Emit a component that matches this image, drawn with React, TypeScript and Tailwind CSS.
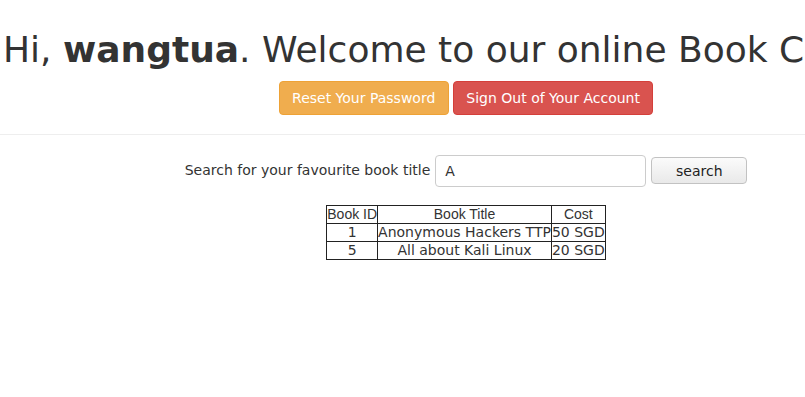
import React, { useState } from 'react';

const books = [
  { id: 1, title: 'Anonymous Hackers TTP', cost: '50 SGD' },
  { id: 5, title: 'All about Kali Linux', cost: '20 SGD' },
];

const App = () => {
  const [query, setQuery] = useState('A');

  return (
    <div className="w-[805px] h-[397px] overflow-hidden bg-white text-[#333] font-['DejaVu_Sans',sans-serif]">
      <div className="w-[932px] pt-[30px]">
        {/* heading is wider than the window, it gets clipped on the right like the original */}
        <h1 className="whitespace-nowrap pl-[3px] text-[36px] leading-[39.6px] font-normal">
          Hi, <b className="font-bold">wangtua</b>. Welcome to our online Book Catalogue
        </h1>

        <div className="mt-[11px] flex justify-center gap-[4px]">
          <button className="px-[12.5px] py-[6px] text-[14px] leading-[20px] text-white bg-[#f0ad4e] border border-[#eea236] rounded-[4px]">
            Reset Your Password
          </button>
          <button className="px-[12.5px] py-[6px] text-[14px] leading-[20px] text-white bg-[#d9534f] border border-[#d43f3a] rounded-[4px]">
            Sign Out of Your Account
          </button>
        </div>
      </div>

      <hr className="mt-[19px] w-[805px] border-t border-[#eee]" />

      <div className="w-[932px]">
        <div className="mt-[20px] flex justify-center items-center gap-[5px] text-[14px]">
          <label>Search for your favourite book title</label>
          <input
            value={query}
            onChange={(e) => setQuery(e.target.value)}
            className="w-[211px] h-[32px] px-[9px] pt-[1px] border border-[#ccc] rounded-[4px] text-[14px] outline-none"
          />
          <button className="w-[96px] h-[27px] pt-[2px] rounded-[4px] border border-[#c2c2c2] bg-gradient-to-b from-[#fbfbfb] to-[#e9e9e9] text-[14px] text-[#222]">
            search
          </button>
        </div>

        <table className="mx-auto mt-[18px] border-collapse text-[14px]">
          <thead>
            <tr className="font-['Liberation_Sans',sans-serif]">
              <th className="border border-[#222] p-0 leading-[17px] font-normal">Book ID</th>
              <th className="border border-[#222] p-0 leading-[17px] font-normal">Book Title</th>
              <th className="border border-[#222] p-0 leading-[17px] font-normal">Cost</th>
            </tr>
          </thead>
          <tbody>
            {books.map((b) => (
              <tr key={b.id}>
                <td className="border border-[#222] p-0 leading-[17px] text-center">{b.id}</td>
                <td className="border border-[#222] p-0 leading-[17px] text-center">{b.title}</td>
                <td className="border border-[#222] p-0 leading-[17px] text-center">{b.cost}</td>
              </tr>
            ))}
          </tbody>
        </table>
      </div>
    </div>
  );
};

export default App;
